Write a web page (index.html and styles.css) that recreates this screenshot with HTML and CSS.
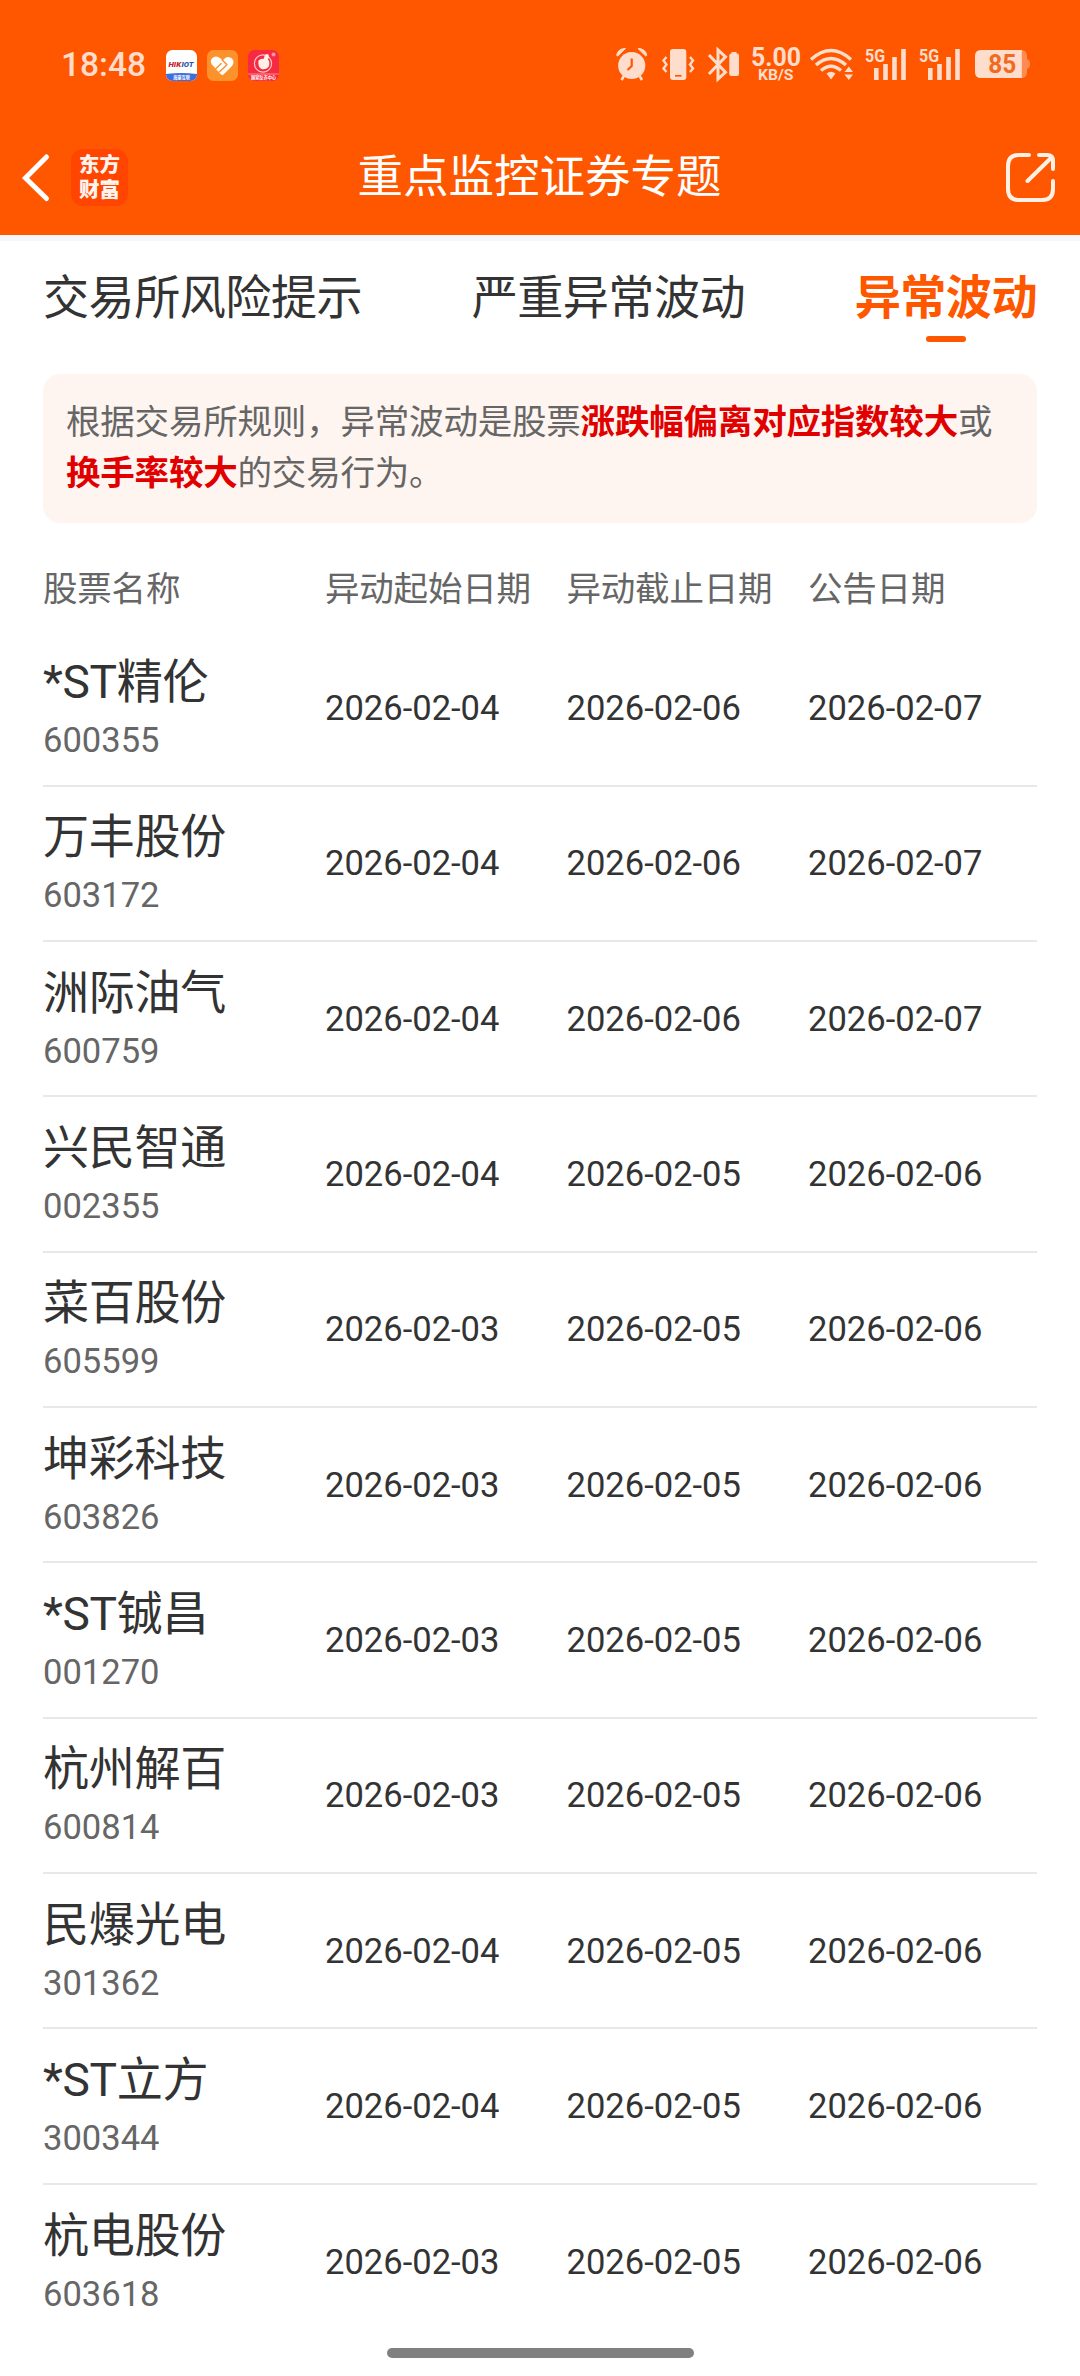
FILE: index.html
```
<!DOCTYPE html>
<html lang="zh-CN">
<head>
<meta charset="utf-8">
<title>重点监控证券专题</title>
<link rel="stylesheet" href="styles.css">
</head>
<body>
<header class="top">
  <div class="status">
    <span class="clock">18:48</span>
    <div class="apps">
      <svg width="31" height="31" viewBox="0 0 31 31">
        <defs><clipPath id="app"><rect width="31" height="31" rx="6.5"/></clipPath></defs>
        <g clip-path="url(#app)"><rect width="31" height="31" fill="#fff"/><path d="M0 24Q15.500 22 31 24V31H0Z" fill="#3b6fe0"/></g>
        <text x="2.500" y="16.500" class="hik" textLength="12.500" lengthAdjust="spacingAndGlyphs" fill="#c8232c">HIK</text>
        <text x="15.500" y="16.500" class="hik" textLength="12" lengthAdjust="spacingAndGlyphs" fill="#2c5aa8">IOT</text>
        <text x="7" y="29" class="tiny" textLength="17" lengthAdjust="spacingAndGlyphs">海康互联</text>
      </svg>
      <svg width="31" height="31" viewBox="0 0 31 31">
        <rect width="31" height="31" rx="6.500" fill="#fb922b"/>
        <path d="M4.500 14Q2.500 9.500 6.500 7.200Q10 5.500 13.500 8.500L15.500 10.500L18 8.300Q21.500 5.500 25 8.500Q28 12 25 16L17 24Q15 26 13 23.500Z" fill="#fff"/>
        <path d="M8.500 19L14.500 13.300M12 22.300L19.500 15.300M15 9.800L20.300 15" stroke="#fb922b" stroke-width="1.500" fill="none"/>
      </svg>
      <svg width="31" height="31" viewBox="0 0 31 31">
        <rect width="31" height="31" rx="6.500" fill="#f62b43"/>
        <circle cx="15" cy="13.500" r="8.600" fill="none" stroke="#ffc9c4" stroke-width="1.200"/>
        <path d="M10.500 10.500Q13 8 15.500 9L17 5Q21 2.500 21 7L20 9.500Q22.500 12 20.500 17Q18 20 13.500 19Q9.500 17 10.500 10.500Z" fill="#fff0e8"/>
        <circle cx="25.500" cy="4.500" r="2" fill="#ff9a99"/>
        <path d="M0 24H31" stroke="#ff8b84" stroke-width="1"/>
        <text x="3" y="29.300" class="tiny" textLength="25" lengthAdjust="spacingAndGlyphs">国家反诈中心</text>
      </svg>
    </div>
    <div class="signals">
      <svg width="32" height="34" viewBox="616 48 32 34">
        <circle cx="631.700" cy="65.500" r="13.600" fill="#ffddcc"/>
        <path d="M624.500 75L621.500 80M639 75L642 80" stroke="#ffddcc" stroke-width="2.600"/>
        <path d="M616.600 55.200Q618 48.500 625.500 48.500L617.800 56ZM646.800 55.200Q645.400 48.500 638 48.500L645.700 56Z" fill="#ffddcc" stroke="#ffddcc" stroke-width="1"/>
        <path d="M631.700 58.500V66L627.500 70" fill="none" stroke="#ff5700" stroke-width="2.200"/>
      </svg>
      <svg width="32" height="34" viewBox="662 48 32 34">
        <rect x="670" y="49" width="16.300" height="31" rx="3" fill="#ffddcc"/><path d="M675 75.800H681.500" stroke="#ff5700" stroke-width="1.700"/>
        <path d="M666.500 57L663.500 60.500L666.500 64.500L663.500 68.500L666.500 72M690 57L693 60.500L690 64.500L693 68.500L690 72" fill="none" stroke="#ffddcc" stroke-width="2.400"/>
      </svg>
      <svg width="32" height="34" viewBox="708 48 32 34">
        <path d="M709 55L725.500 72.200L718 79V50L725.500 56.800L709 74" fill="none" stroke="#ffddcc" stroke-width="3"/>
        <rect x="729.300" y="53.500" width="9.700" height="22.500" rx="2" fill="#ffddcc"/><rect x="731.500" y="52" width="5" height="3" fill="#ffddcc"/>
      </svg>
      <svg class="speed" width="50" height="34" viewBox="751 48 50 34">
        <text x="751" y="66" class="rate" textLength="50" lengthAdjust="spacingAndGlyphs">5.00</text>
        <text x="758" y="79.500" class="unit" textLength="35.500" lengthAdjust="spacingAndGlyphs">KB/S</text>
      </svg>
      <svg class="wifi" width="44" height="34" viewBox="810 48 44 34">
        <g fill="none" stroke="#ffddcc" stroke-width="3.400"><path d="M811 59.500Q831 41.500 851 59.500M816 65Q831 52 846 65M821 70.500Q831 62 841 70.500"/></g>
        <path d="M826.500 73.500Q831 70 835.500 73.500L831 79.500Z" fill="#ffddcc"/>
        <path d="M844.500 72L848.800 66.500L853 72ZM844.500 74.500L848.800 80L853 74.500Z" fill="#ffddcc"/>
      </svg>
      <svg width="42" height="34" viewBox="865 48 42 34" class="cell">
        <text x="865" y="62" class="gen" textLength="20" lengthAdjust="spacingAndGlyphs">5G</text>
        <path d="M876.300 68V80M885.500 64V80M894.500 57V80M903.500 49V80" stroke="#ffddcc" stroke-width="4.600"/>
      </svg>
      <svg width="42" height="34" viewBox="865 48 42 34" class="cell">
        <text x="865" y="62" class="gen" textLength="20" lengthAdjust="spacingAndGlyphs">5G</text>
        <path d="M876.300 68V80M885.500 64V80M894.500 57V80M903.500 49V80" stroke="#ffddcc" stroke-width="4.600"/>
      </svg>
      <svg width="56" height="34" viewBox="975 48 56 34" class="power">
        <path d="M1021 50Q1027 50 1027 56V59Q1030 60 1030 64Q1030 68 1027 69V72Q1027 78 1021 78Z" fill="#ff8a52"/>
        <path d="M981 50H1021.800V78H981Q975 78 975 72V56Q975 50 981 50Z" fill="#ffddcc"/>
        <text x="988.300" y="73.300" class="level" textLength="28" lengthAdjust="spacingAndGlyphs">85</text>
      </svg>
    </div>
  </div>
  <nav class="nav">
    <div class="nav-left">
      <svg width="28" height="48" viewBox="0 0 28 48"><path d="M24.500 3L3.500 24L24.500 44.500" fill="none" stroke="#fff" stroke-width="5" stroke-linecap="round"/></svg>
      <div class="brand"><span>东方</span><span>财富</span></div>
    </div>
    <h1 class="title">重点监控证券专题</h1>
    <svg class="share" width="52" height="52" viewBox="0 0 52 52"><path d="M24 3H14Q3 3 3 14V37Q3 48 14 48H37Q48 48 48 37V29M34 3H42Q48 3 48 9V17M22.500 29L47 5" fill="none" stroke="#fff0e6" stroke-width="4" stroke-linecap="round"/></svg>
  </nav>
</header>
<main class="page">
  <div class="tabs">
    <span class="tab">交易所风险提示</span>
    <span class="tab">严重异常波动</span>
    <span class="tab active">异常波动</span>
  </div>
  <p class="notice">根据交易所规则，异常波动是股票<b>涨跌幅偏离对应指数较大</b>或<b>换手率较大</b>的交易行为。</p>
  <div class="row head"><span>股票名称</span><span>异动起始日期</span><span>异动截止日期</span><span>公告日期</span></div>
  <div class="list">
    <div class="row"><div class="stock"><span class="name">*ST精伦</span><span class="code">600355</span></div><span>2026-02-04</span><span>2026-02-06</span><span>2026-02-07</span></div>
    <div class="row"><div class="stock"><span class="name">万丰股份</span><span class="code">603172</span></div><span>2026-02-04</span><span>2026-02-06</span><span>2026-02-07</span></div>
    <div class="row"><div class="stock"><span class="name">洲际油气</span><span class="code">600759</span></div><span>2026-02-04</span><span>2026-02-06</span><span>2026-02-07</span></div>
    <div class="row"><div class="stock"><span class="name">兴民智通</span><span class="code">002355</span></div><span>2026-02-04</span><span>2026-02-05</span><span>2026-02-06</span></div>
    <div class="row"><div class="stock"><span class="name">菜百股份</span><span class="code">605599</span></div><span>2026-02-03</span><span>2026-02-05</span><span>2026-02-06</span></div>
    <div class="row"><div class="stock"><span class="name">坤彩科技</span><span class="code">603826</span></div><span>2026-02-03</span><span>2026-02-05</span><span>2026-02-06</span></div>
    <div class="row"><div class="stock"><span class="name">*ST铖昌</span><span class="code">001270</span></div><span>2026-02-03</span><span>2026-02-05</span><span>2026-02-06</span></div>
    <div class="row"><div class="stock"><span class="name">杭州解百</span><span class="code">600814</span></div><span>2026-02-03</span><span>2026-02-05</span><span>2026-02-06</span></div>
    <div class="row"><div class="stock"><span class="name">民爆光电</span><span class="code">301362</span></div><span>2026-02-04</span><span>2026-02-05</span><span>2026-02-06</span></div>
    <div class="row"><div class="stock"><span class="name">*ST立方</span><span class="code">300344</span></div><span>2026-02-04</span><span>2026-02-05</span><span>2026-02-06</span></div>
    <div class="row"><div class="stock"><span class="name">杭电股份</span><span class="code">603618</span></div><span>2026-02-03</span><span>2026-02-05</span><span>2026-02-06</span></div>
  </div>
</main>
<footer class="home"><div class="home-bar"></div></footer>
</body>
</html>
```
FILE: styles.css
```
* { box-sizing: border-box; }
body {
  margin: 0;
  width: 1080px;
  height: 2376px;
  overflow: hidden;
  display: flex;
  flex-direction: column;
  background: #fff;
  color: #333;
  font-family: Roboto, "Noto Sans CJK SC", sans-serif;
  font-size: 34.56px;
}
svg { display: block; flex: none; overflow: visible; }

.top { height: 241px; flex: none; background: #ff5700; border-bottom: 6px solid #f7f7f9; }
.status { height: 118px; display: flex; align-items: flex-start; padding: 48px 49px 0 61px; color: #ffddcc; }
.clock { width: 105px; font-size: 33.500px; line-height: 34px; font-weight: 500; }
.apps { display: flex; gap: 10px; padding-top: 2px; }
.hik { font: italic 900 7px Roboto, sans-serif; }
.tiny { font: 700 5px "Noto Sans CJK SC", sans-serif; fill: #fff; }
.signals { display: flex; margin-left: auto; }
.signals svg { margin-right: 14px; }
.signals .speed { margin: 0 9px 0 -3px; }
.rate { font: 700 25px Roboto, sans-serif; fill: #ffddcc; }
.unit { font: 700 15.500px Roboto, sans-serif; fill: #ffddcc; }
.signals .wifi { margin-right: 11px; }
.signals .cell { margin-right: 12px; }
.signals .power { margin: 0 0 0 2px; }
.gen { font: 700 18px Roboto, sans-serif; fill: #ffddcc; }
.level { font: 700 25px Roboto, sans-serif; fill: #f06a22; }

.nav { height: 117px; display: grid; grid-template-columns: 1fr auto 1fr; align-items: center; padding: 2px 23px 0 22px; }
.nav-left { display: flex; align-items: center; gap: 21px; }
.brand {
  width: 57px; height: 57px; border-radius: 12px; background: #ff4500; color: #fff3ee;
  display: flex; flex-direction: column; align-items: center; justify-content: center; padding-bottom: 4px;
  font: 900 20.500px/25px "Noto Sans CJK SC", sans-serif;
}
.title { margin: 0; color: #fff; font-size: 45.500px; font-weight: 400; line-height: 60px; }
.share { justify-self: end; }

.page { flex: 1; padding: 0 43px; }
.tabs { height: 133px; display: flex; justify-content: space-between; align-items: flex-start; padding-top: 24px; font-size: 46.080px; line-height: 66px; letter-spacing: -.5px; }
.tab { position: relative; }
.active { color: #ff5700; font-weight: 700; }
.active::after {
  content: ""; position: absolute; left: 50%; bottom: -11px; width: 40px; height: 6px;
  margin-left: -20px; border-radius: 3px; background: #ff5700;
}
.notice { margin: 0; height: 149px; padding: 23px 23px; border-radius: 17px; background: #fff5f0; color: #666; line-height: 51px; letter-spacing: -.24px; }
.notice b { color: #e00000; }
.row { display: grid; grid-template-columns: 282px 241.500px 241.500px 1fr; align-items: center; height: 155.340px; border-bottom: 2px solid #e8e8e8; }
.row:last-child { border-bottom: 0; }
.head { height: 108.500px; padding-top: 17px; border: 0; color: #666; letter-spacing: -.24px; }
.stock { display: flex; flex-direction: column; }
.name { font-size: 46.080px; line-height: 64px; letter-spacing: -.3px; }
.code { color: #666; line-height: 52px; }

.home { height: 31px; flex: none; display: flex; justify-content: center; padding-top: 3px; }
.home-bar { width: 307px; height: 10px; border-radius: 5px; background: #808080; }
```
